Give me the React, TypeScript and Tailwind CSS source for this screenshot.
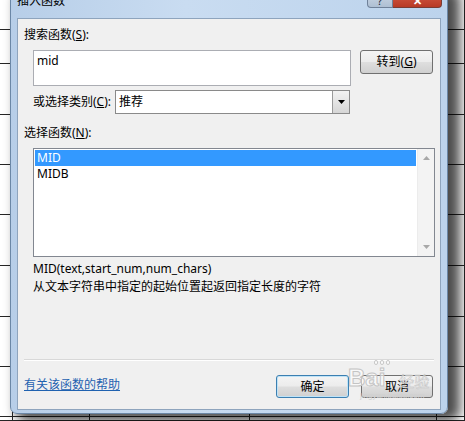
const font = "font-['Noto_Sans','Noto_Sans_CJK_SC',sans-serif]";

const rowHeights = [30, 34, 51, 50, 50, 51, 51, 50, 50, 4];
const colCount = 5;

const btn =
  "flex items-center justify-center rounded-[3px] border bg-[linear-gradient(#f4f4f4_0%,#ececec_48%,#dedede_52%,#d0d0d0_100%)] text-[12px] leading-[16px] text-black";

function Sheet() {
  return (
    <div className="grid grid-cols-[13px_77px_160px_187px_1fr] grid-rows-[30px_34px_51px_50px_50px_51px_51px_50px_50px_4px] w-[465px] h-[421px] bg-white">
      {rowHeights.map((_, r) =>
        Array.from({ length: colCount }).map((__, c) => (
          <div key={r + "-" + c} className="border-r border-b border-[#262626]" />
        ))
      )}
    </div>
  );
}

function Triangle({ up, color }: { up?: boolean; color: string }) {
  return (
    <svg width="7" height="4" viewBox="0 0 7 4">
      <polygon points={up ? "0,4 7,4 3.5,0" : "0,0 7,0 3.5,4"} fill={color} />
    </svg>
  );
}

export default function App() {
  return (
    <div className={`relative w-[465px] h-[421px] overflow-hidden ${font}`}>
      <Sheet />

      {/* dialog window */}
      <div className="absolute left-[10px] top-[-12px] w-[438px] h-[426px] flex flex-col rounded-[7px] border border-[#6b87a6] bg-[linear-gradient(90deg,#b7cee8,#c9dcf1_40%,#bcd3ec)] px-[6px] pb-[3px] shadow-[9px_4px_12px_3px_rgba(0,0,0,0.7)]">
        {/* title bar */}
        <div className="h-[29px] flex items-start justify-between">
          <span className="pt-[4px] text-[12px] leading-[16px] text-black">插入函数</span>
          <div className="flex mr-[-1px]">
            <div className="w-[26px] h-[19px] flex items-end justify-center rounded-bl-[4px] border border-t-0 border-[#6f8199] bg-[linear-gradient(#d3deea,#aebfd3)] text-[11px] leading-[12px] text-[#1d2733]">
              ?
            </div>
            <div className="w-[49px] h-[19px] flex items-end justify-center rounded-br-[4px] border border-t-0 border-l-0 border-[#7a3b33] bg-[linear-gradient(#e8a597,#c64a35_60%,#b83a25)] text-[11px] leading-[12px] font-bold text-white">
              ✕
            </div>
          </div>
        </div>

        {/* client area */}
        <div className="h-[392px] flex flex-col border border-[#8ea4bd] bg-[#f0f0f0] px-[6px] text-[12px] text-black">
          <div className="mt-[8px] leading-[16px]">
            搜索函数(<span className="underline">S</span>):
          </div>

          <div className="mt-[7px] ml-[9px] flex items-start">
            <div className="w-[318px] h-[36px] border border-[#abadb3] bg-white px-[3px] pt-[2px] leading-[16px]">mid</div>
            <div className={`${btn} ml-[9px] w-[73px] h-[24px] border-[#707070]`}>
              转到(<span className="underline">G</span>)
            </div>
          </div>

          <div className="mt-[4px] ml-[9px] flex items-center h-[24px]">
            <div className="w-[82px] leading-[16px]">
              或选择类别(<span className="underline">C</span>):
            </div>
            <div className="w-[235px] h-[24px] flex border border-[#8a8a8a] bg-white">
              <div className="flex-1 px-[3px] leading-[22px]">推荐</div>
              <div className="w-[17px] h-full flex items-center justify-center border-l border-[#9a9a9a] bg-[linear-gradient(#f2f2f2,#d6d6d6)]">
                <Triangle color="#000" />
              </div>
            </div>
          </div>

          <div className="mt-[11px] leading-[16px]">
            选择函数(<span className="underline">N</span>):
          </div>

          <div className="mt-[7px] ml-[9px] w-[402px] h-[109px] flex border border-[#828790] bg-white">
            <div className="flex-1 p-[1px]">
              <div className="h-[16px] bg-[#3399ff] px-[2px] leading-[16px] text-white">MID</div>
              <div className="h-[16px] px-[2px] leading-[16px]">MIDB</div>
            </div>
            <div className="w-[17px] flex flex-col items-center justify-between py-[7px] bg-[#f3f3f3] border-l border-[#ececec]">
              <Triangle up color="#a8a8a8" />
              <Triangle color="#a8a8a8" />
            </div>
          </div>

          <div className="mt-[3px] ml-[9px] leading-[18px]">MID(text,start_num,num_chars)</div>
          <div className="ml-[9px] leading-[18px]">从文本字符串中指定的起始位置起返回指定长度的字符</div>

          <div className="flex-1" />
          <div className="border-t border-b border-t-[#d8d8d8] border-b-white" />

          <div className="mt-[14px] mb-[11px] h-[23px] flex items-center">
            <span className="mb-[4px] leading-[16px] text-[#1f62b0] underline">有关该函数的帮助</span>
            <div className={`${btn} ml-auto w-[73px] h-[23px] border-[#3c7fb1] shadow-[inset_0_0_0_1px_#bfe3f7]`}>确定</div>
            <div className={`${btn} ml-[12px] mr-[1px] w-[72px] h-[23px] border-[#707070]`}>取消</div>
          </div>
        </div>
      </div>

      {/* watermark */}
      <div className="absolute left-[348px] top-[360px] flex flex-col items-start pointer-events-none">
        <div className="ml-[26px] flex gap-[2px]">
          <span className="w-[4px] h-[5px] rounded-full bg-white/70 border border-[#c8c8c8]" />
          <span className="w-[4px] h-[5px] rounded-full bg-white/70 border border-[#c8c8c8]" />
          <span className="w-[4px] h-[5px] rounded-full bg-white/70 border border-[#c8c8c8]" />
        </div>
        <div className="flex items-end">
          <span className="text-[24px] leading-[26px] font-bold text-white/60 [-webkit-text-stroke:1px_#c4c4c4] font-['Liberation_Sans',sans-serif]">Bai</span>
          <span className="ml-[14px] text-[15px] leading-[20px] text-white/50 [-webkit-text-stroke:0.5px_#c4c4c4]">经验</span>
        </div>
        <span className="ml-[12px] text-[8px] leading-[10px] text-[#d0d0d0] font-['Liberation_Sans',sans-serif]">jingyan.baidu.com</span>
      </div>
    </div>
  );
}
